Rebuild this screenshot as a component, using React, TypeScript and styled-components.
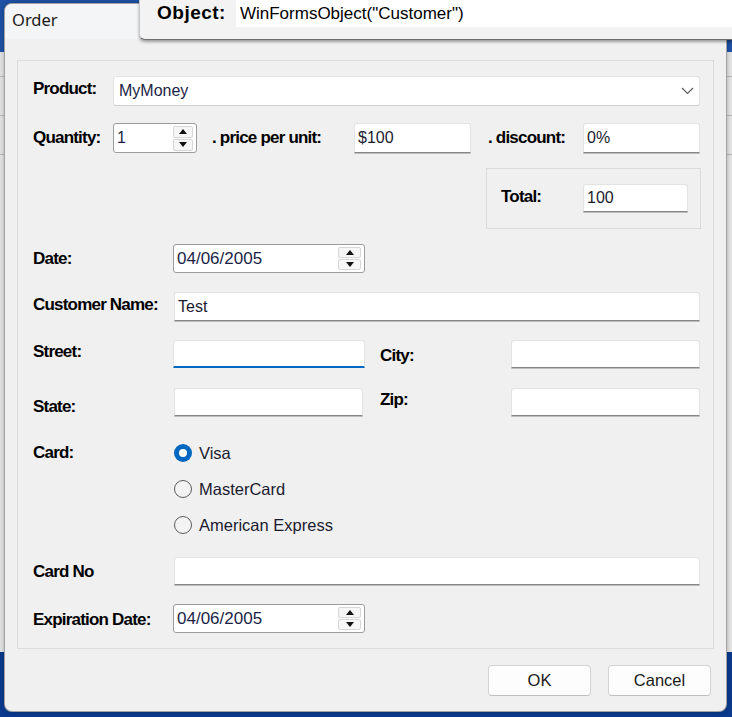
import React from "react";
import styled, { createGlobalStyle } from "styled-components";

const Global = createGlobalStyle`
  html, body { margin: 0; padding: 0; }
  body {
    width: 732px; height: 717px; overflow: hidden;
    background: #0b3a8e;
    font-family: "Liberation Sans", Arial, sans-serif;
  }
`;

const Desktop = styled.div`
  position: relative;
  width: 732px;
  height: 717px;
  overflow: hidden;
  display: flex;
  flex-direction: column;
`;

const Band = styled.div<{ $h?: number; $bg: string }>`
  flex: ${(p) => (p.$h ? "none" : "1")};
  height: ${(p) => (p.$h ? `${p.$h}px` : "auto")};
  background: ${(p) => p.$bg};
`;

const AppArea = styled.div`
  height: 600px;
  flex: none;
  background: #e4e4e4;
  display: flex;
  flex-direction: column;
  gap: 38px;
  padding-top: 24px;
  box-sizing: border-box;
`;

const AppLine = styled.div`
  height: 1px;
  background: #b9b9b9;
`;

/* floating window on the desktop */
const Window = styled.div`
  position: absolute;
  left: 4px;
  top: 3px;
  width: 723px;
  height: 709px;
  box-sizing: border-box;
  border: 1px solid rgba(0, 0, 0, 0.32);
  border-radius: 8px;
  background: #f0f0f0;
  overflow: hidden;
  display: flex;
  flex-direction: column;
  box-shadow: 0 0 5px rgba(0, 0, 0, 0.25);
`;

const TitleBar = styled.div`
  flex: none;
  height: 35px;
  background: #f4f5f7;
  display: flex;
  align-items: center;
  padding: 0 0 4px 7px;
  box-sizing: border-box;
  font-family: "Noto Sans", "Open Sans", sans-serif;
  font-size: 16.5px;
  color: #1a1a1a;
`;

const Body = styled.div`
  flex: 1;
  display: flex;
  flex-direction: column;
  padding: 21px 12px 0 12px;
`;

const GroupBox = styled.div`
  border: 1px solid #dcdcdc;
  padding: 15px 13px 15px 15px;
  display: flex;
  flex-direction: column;
`;

const Row = styled.div<{ $h: number; $mt?: number; $end?: boolean; $top?: boolean }>`
  display: flex;
  align-items: ${(p) => (p.$top ? "flex-start" : "center")};
  justify-content: ${(p) => (p.$end ? "flex-end" : "flex-start")};
  height: ${(p) => p.$h}px;
  margin-top: ${(p) => p.$mt ?? 0}px;
`;

const Label = styled.span<{ $w?: number; $ml?: number; $shift?: number; $cell?: number }>`
  flex: none;
  width: ${(p) => (p.$w ? `${p.$w}px` : "auto")};
  margin-left: ${(p) => p.$ml ?? 0}px;
  font-weight: 700;
  font-size: 17px;
  letter-spacing: -0.8px;
  color: #000;
  white-space: nowrap;
  ${(p) =>
    p.$cell
      ? `height: ${p.$cell}px; display: flex; align-items: center;`
      : ""}
  ${(p) =>
    p.$shift
      ? p.$shift > 0
        ? `margin-top: ${2 * p.$shift}px;`
        : `margin-bottom: ${-2 * p.$shift}px;`
      : ""}
`;

const TextBox = styled.div<{ $w: number; $focus?: boolean }>`
  flex: none;
  width: ${(p) => p.$w}px;
  height: 100%;
  box-sizing: border-box;
  background: #fff;
  border: 1px solid #e3e3e3;
  border-bottom: ${(p) => (p.$focus ? "2px solid #0067c0" : "1px solid #868686")};
  box-shadow: ${(p) => (p.$focus ? "none" : "0 1px 0 #bdbdbd")};
  border-radius: 3px 3px 1px 1px;
  display: flex;
  align-items: center;
  padding: 0 3px;
  font-size: 16px;
  color: #1b1b2f;
`;

const Combo = styled.div<{ $w: number }>`
  flex: none;
  width: ${(p) => p.$w}px;
  height: 100%;
  box-sizing: border-box;
  background: #fff;
  border: 1px solid #e2e2e2;
  border-bottom-color: #cdcdcd;
  border-radius: 3px;
  display: flex;
  align-items: center;
  justify-content: space-between;
  padding: 0 5px 0 5px;
  font-size: 16px;
  color: #1b2446;
`;

const Spinner = styled.div<{ $w: number; $h: number }>`
  flex: none;
  width: ${(p) => p.$w}px;
  height: 100%;
  margin-left: auto;
  display: flex;
  flex-direction: column;
  justify-content: center;
  gap: 1px;
  & > button {
    height: ${(p) => p.$h}px;
  }
`;

const SpinButton = styled.button`
  padding: 0;
  margin: 0;
  width: 100%;
  box-sizing: border-box;
  border: 1px solid #d6d6d6;
  border-radius: 2px;
  background: #f6f6f6;
  display: flex;
  align-items: center;
  justify-content: center;
`;

const UpDown = styled.div<{ $w: number; $fs: number }>`
  flex: none;
  width: ${(p) => p.$w}px;
  height: 100%;
  box-sizing: border-box;
  background: #fff;
  border: 1px solid #9c9c9c;
  border-radius: 3px;
  display: flex;
  align-items: center;
  padding: 0 3px 0 3px;
  font-size: ${(p) => p.$fs}px;
  color: #1b2446;
`;

const TotalBox = styled.div`
  flex: none;
  width: 215px;
  height: 61px;
  box-sizing: border-box;
  margin-right: -1px;
  border: 1px solid #dadada;
  padding: 15px 12px 16px 14px;
  display: flex;
  align-items: center;
`;

const RadioList = styled.div`
  display: flex;
  flex-direction: column;
`;

const RadioItem = styled.div`
  height: 36px;
  display: flex;
  align-items: center;
  gap: 7px;
  font-size: 16.5px;
  color: #1b1b2f;
`;

const RadioDot = styled.span<{ $on?: boolean }>`
  flex: none;
  width: 18px;
  height: 18px;
  box-sizing: border-box;
  border-radius: 50%;
  border: ${(p) => (p.$on ? "none" : "1px solid #5c5c5c")};
  background: ${(p) => (p.$on ? "#0067c0" : "#f3f3f3")};
  display: flex;
  align-items: center;
  justify-content: center;
  &::after {
    content: "";
    display: ${(p) => (p.$on ? "block" : "none")};
    width: 8px;
    height: 8px;
    border-radius: 50%;
    background: #fff;
  }
`;

const ButtonBar = styled.div`
  display: flex;
  justify-content: flex-end;
  gap: 17px;
  margin-top: 16px;
  padding-right: 3px;
`;

const DlgButton = styled.button`
  width: 103px;
  height: 31px;
  box-sizing: border-box;
  border: 1px solid #d3d3d3;
  border-bottom-color: #bfbfbf;
  border-radius: 4px;
  background: #fdfdfd;
  font-family: "Liberation Sans", Arial, sans-serif;
  font-size: 16.5px;
  color: #1a1a1a;
  padding: 0;
`;

/* inspector tooltip lying over the window */
const Tip = styled.div`
  position: absolute;
  left: 139px;
  top: 0;
  right: -8px;
  height: 40px;
  box-sizing: border-box;
  background: #f3f3f3;
  border-left: 1px solid #c9c9c9;
  border-bottom: 1px solid #6f6f6f;
  border-bottom-left-radius: 6px;
  box-shadow: 0 2px 3px rgba(0, 0, 0, 0.35);
  display: flex;
  align-items: flex-start;
  padding-left: 17px;
`;

const TipLabel = styled.span`
  height: 26px;
  display: flex;
  align-items: center;
  font-weight: 700;
  font-size: 19px;
  letter-spacing: 0.5px;
  color: #000;
`;

const TipValue = styled.div`
  flex: 1;
  margin-left: 10px;
  height: 27px;
  background: #fff;
  display: flex;
  align-items: center;
  padding-left: 4px;
  font-size: 17px;
  color: #000;
`;

const Arrow = ({ up }: { up?: boolean }) => (
  <svg width="8" height="5" viewBox="0 0 8 5">
    <polygon points={up ? "0,5 8,5 4,0" : "0,0 8,0 4,5"} fill="#111" />
  </svg>
);

const Chevron = () => (
  <svg width="13" height="8" viewBox="0 0 13 8">
    <polyline points="1,1 6.5,6.5 12,1" fill="none" stroke="#606060" strokeWidth="1.2" />
  </svg>
);

const NumericUpDown = ({ value, w, fs, sw, bh }: { value: string; w: number; fs: number; sw: number; bh: number }) => (
  <UpDown $w={w} $fs={fs}>
    <span>{value}</span>
    <Spinner $w={sw} $h={bh}>
      <SpinButton>
        <Arrow up />
      </SpinButton>
      <SpinButton>
        <Arrow />
      </SpinButton>
    </Spinner>
  </UpDown>
);

export default function App() {
  return (
    <>
      <Global />
      <Desktop>
        <Band $h={52} $bg="#1f51a6" />
        <AppArea>
          <AppLine />
          <AppLine />
          <AppLine />
        </AppArea>
        <Band $bg="#0b3a8e" />

        <Window>
          <TitleBar>Order</TitleBar>
          <Body>
            <GroupBox>
              <Row $h={30}>
                <Label $w={80} $shift={-2}>Product:</Label>
                <Combo $w={587}>
                  <span>MyMoney</span>
                  <Chevron />
                </Combo>
              </Row>

              <Row $h={30} $mt={17}>
                <Label $w={80}>Quantity:</Label>
                <NumericUpDown value="1" w={84} fs={16} sw={20} bh={12} />
                <Label $w={142} $ml={15}>. price per unit:</Label>
                <TextBox $w={117}>$100</TextBox>
                <Label $w={95} $ml={17}>. discount:</Label>
                <TextBox $w={117}>0%</TextBox>
              </Row>

              <Row $h={61} $mt={15} $end>
                <TotalBox>
                  <Label $w={82} $shift={-1}>Total:</Label>
                  <TextBox $w={105}>100</TextBox>
                </TotalBox>
              </Row>

              <Row $h={29} $mt={15}>
                <Label $w={140}>Date:</Label>
                <NumericUpDown value="04/06/2005" w={192} fs={17} sw={23} bh={11} />
              </Row>

              <Row $h={29} $mt={19}>
                <Label $w={141} $shift={-2}>Customer Name:</Label>
                <TextBox $w={526}>Test</TextBox>
              </Row>

              <Row $h={28} $mt={19}>
                <Label $w={140} $shift={-2}>Street:</Label>
                <TextBox $w={192} $focus />
                <Label $w={131} $ml={15} $shift={2}>City:</Label>
                <TextBox $w={189} />
              </Row>

              <Row $h={28} $mt={20}>
                <Label $w={141} $shift={5}>State:</Label>
                <TextBox $w={189} />
                <Label $w={131} $ml={17} $shift={-2}>Zip:</Label>
                <TextBox $w={189} />
              </Row>

              <Row $h={108} $mt={19} $top>
                <Label $w={141} $cell={36}>Card:</Label>
                <RadioList>
                  <RadioItem>
                    <RadioDot $on />
                    Visa
                  </RadioItem>
                  <RadioItem>
                    <RadioDot />
                    MasterCard
                  </RadioItem>
                  <RadioItem>
                    <RadioDot />
                    American Express
                  </RadioItem>
                </RadioList>
              </Row>

              <Row $h={28} $mt={14}>
                <Label $w={141} $shift={1}>Card No</Label>
                <TextBox $w={526} />
              </Row>

              <Row $h={29} $mt={19}>
                <Label $w={140} $shift={1}>Expiration Date:</Label>
                <NumericUpDown value="04/06/2005" w={192} fs={17} sw={23} bh={11} />
              </Row>
            </GroupBox>

            <ButtonBar>
              <DlgButton>OK</DlgButton>
              <DlgButton>Cancel</DlgButton>
            </ButtonBar>
          </Body>
        </Window>

        <Tip>
          <TipLabel>Object:</TipLabel>
          <TipValue>WinFormsObject("Customer")</TipValue>
        </Tip>
      </Desktop>
    </>
  );
}
